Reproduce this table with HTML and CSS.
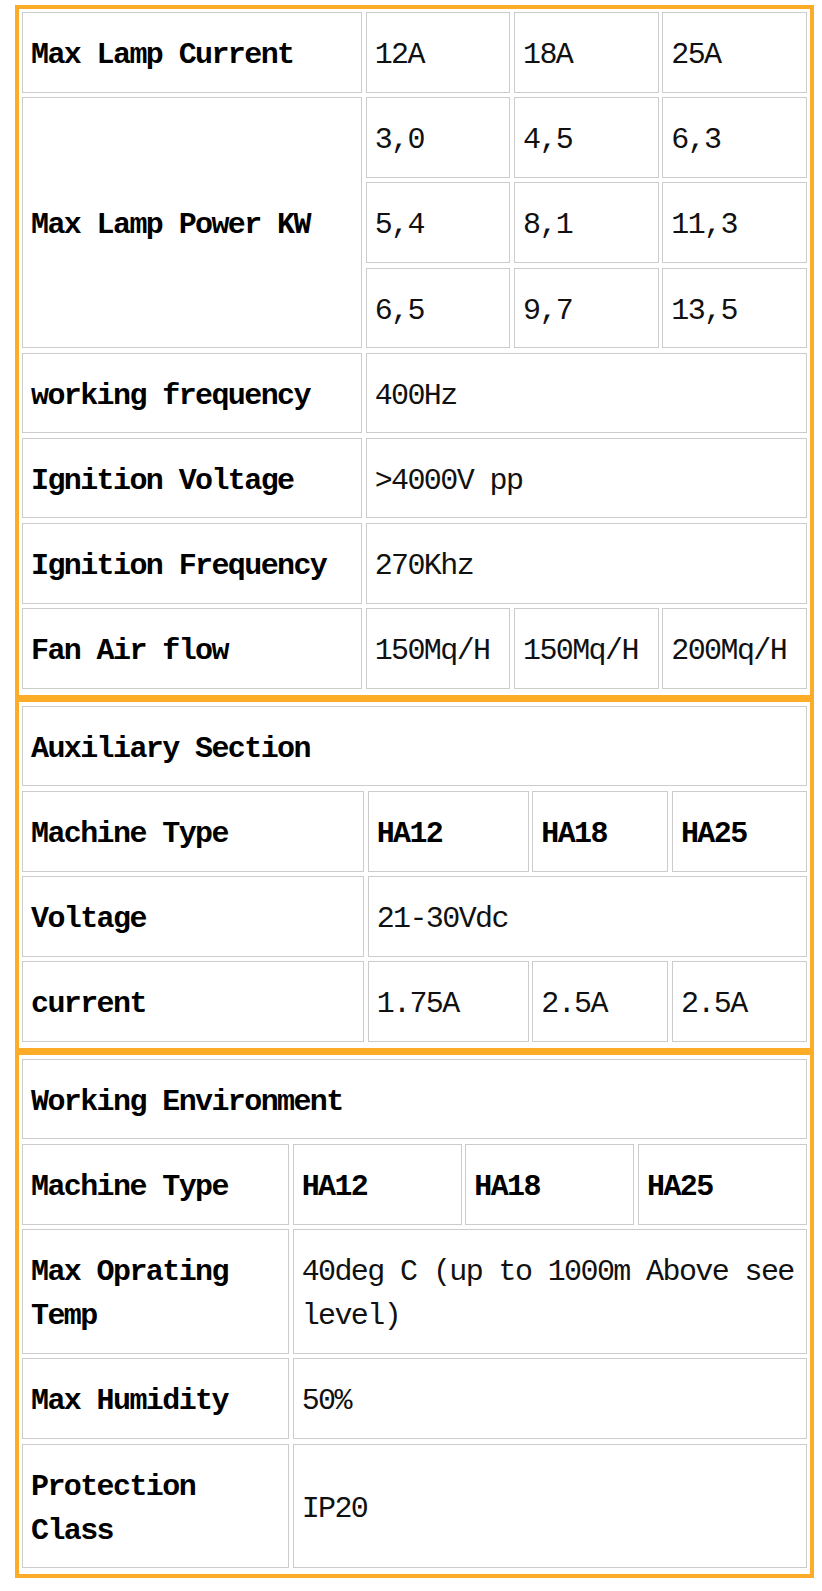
FILE: index.html
```html
<!DOCTYPE html>
<html lang="en">
<head>
<meta charset="utf-8">
<title>Specifications</title>
<link rel="stylesheet" href="styles.css">
</head>
<body>
<div class="spec">
  <section class="block block-lamp">
    <div class="cell label">Max Lamp Current</div>
    <div class="cell">12A</div>
    <div class="cell">18A</div>
    <div class="cell">25A</div>

    <div class="cell label rows-3">Max Lamp Power KW</div>
    <div class="cell">3,0</div>
    <div class="cell">4,5</div>
    <div class="cell">6,3</div>
    <div class="cell">5,4</div>
    <div class="cell">8,1</div>
    <div class="cell">11,3</div>
    <div class="cell">6,5</div>
    <div class="cell">9,7</div>
    <div class="cell">13,5</div>

    <div class="cell label">working frequency</div>
    <div class="cell cols-3">400Hz</div>

    <div class="cell label">Ignition Voltage</div>
    <div class="cell cols-3">&gt;4000V pp</div>

    <div class="cell label">Ignition Frequency</div>
    <div class="cell cols-3">270Khz</div>

    <div class="cell label">Fan Air flow</div>
    <div class="cell">150Mq/H</div>
    <div class="cell">150Mq/H</div>
    <div class="cell">200Mq/H</div>
  </section>

  <section class="block block-aux">
    <div class="cell label cols-4">Auxiliary Section</div>

    <div class="cell label">Machine Type</div>
    <div class="cell label">HA12</div>
    <div class="cell label">HA18</div>
    <div class="cell label">HA25</div>

    <div class="cell label">Voltage</div>
    <div class="cell cols-3">21-30Vdc</div>

    <div class="cell label">current</div>
    <div class="cell">1.75A</div>
    <div class="cell">2.5A</div>
    <div class="cell">2.5A</div>
  </section>

  <section class="block block-env">
    <div class="cell label cols-4">Working Environment</div>

    <div class="cell label">Machine Type</div>
    <div class="cell label">HA12</div>
    <div class="cell label">HA18</div>
    <div class="cell label">HA25</div>

    <div class="cell label">Max Oprating Temp</div>
    <div class="cell cols-3">40deg C (up to 1000m Above see level)</div>

    <div class="cell label">Max Humidity</div>
    <div class="cell cols-3">50%</div>

    <div class="cell label">Protection Class</div>
    <div class="cell cols-3">IP20</div>
  </section>
</div>
</body>
</html>
```

FILE: styles.css
```css
html, body {
  background: #ffffff;
}

body {
  margin: 5px 8px 0 15px;
  font-family: "Liberation Mono", "DejaVu Sans Mono", monospace;
  font-size: 30px;
  letter-spacing: -1.6px;
  line-height: 44px;
  color: #111111;
}

.spec {
  display: flex;
  flex-direction: column;
  width: 799px;
}

.block {
  display: grid;
  column-gap: 3.67px;
  row-gap: 4.7px;
  border: 4px solid #fcac27;
  padding: 3px 3px 6px 3px;
}

.block + .block {
  border-top-width: 3px;
  padding-top: 4px;
}

.block-lamp {
  grid-template-columns: 340px repeat(3, 1fr);
}

.block-aux {
  grid-template-columns: 342px 161px 136px 1fr;
}

.block-env {
  grid-template-columns: 267px repeat(3, 1fr);
}

.cell {
  display: flex;
  align-items: center;
  border: 1px solid #cccccc;
  padding: 20px 8px 14.5px;
  min-width: 0;
}

.label {
  font-weight: bold;
  color: #000000;
}

.rows-3 {
  grid-row: span 3;
}

.cols-3 {
  grid-column: span 3;
}

.cols-4 {
  grid-column: span 4;
}
```
